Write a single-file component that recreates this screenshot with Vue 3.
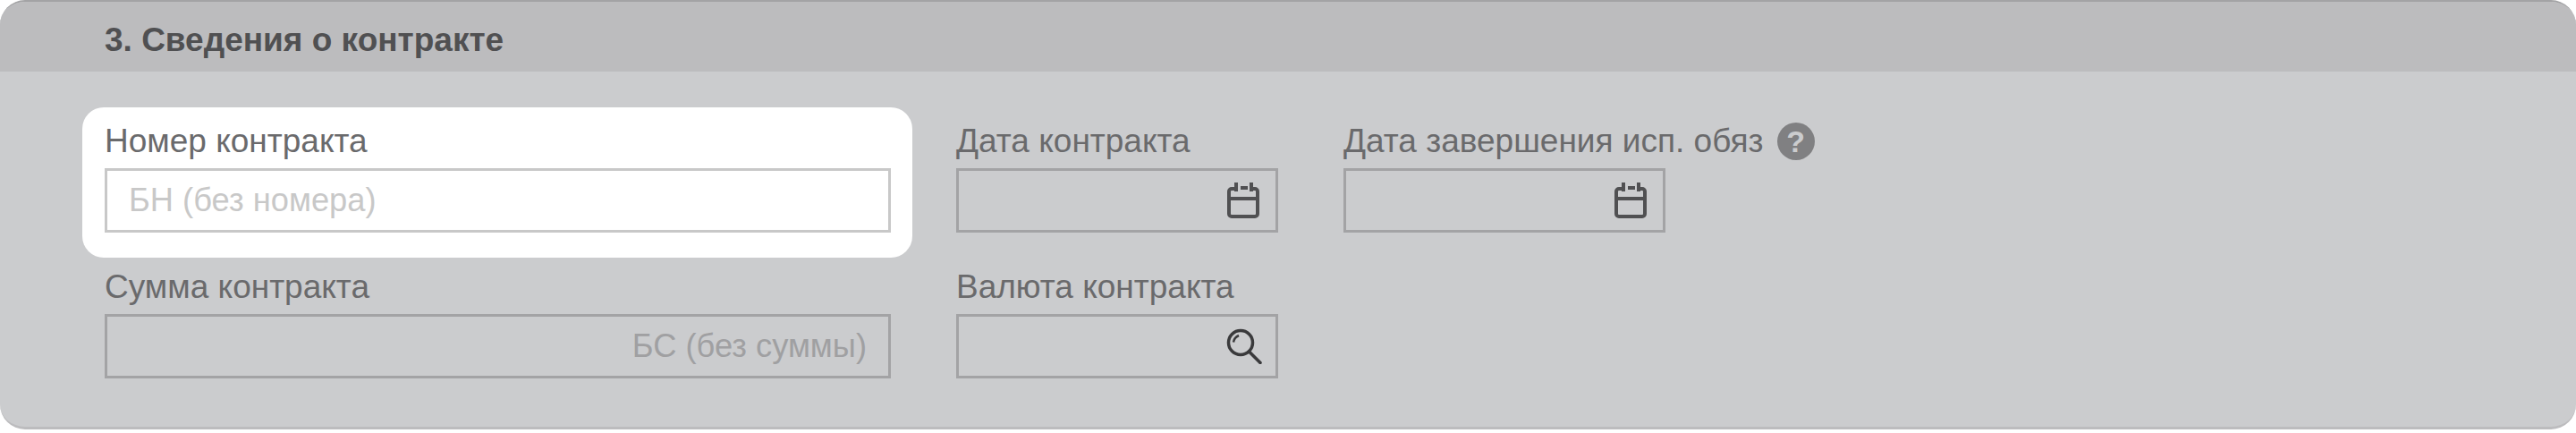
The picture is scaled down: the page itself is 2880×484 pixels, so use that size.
<script setup>
const rows = [
  [
    { label: 'Номер контракта', wide: true, highlight: true, placeholder: 'БН (без номера)' },
    { label: 'Дата контракта', icon: 'calendar' },
    { label: 'Дата завершения исп. обяз', icon: 'calendar', help: true },
  ],
  [
    { label: 'Сумма контракта', wide: true, placeholder: 'БС (без суммы)', right: true },
    { label: 'Валюта контракта', icon: 'search' },
  ],
]
</script>

<template>
  <section class="panel">
    <header class="panel-head">
      <h2>3. Сведения о контракте</h2>
    </header>
    <div class="panel-body">
      <div v-for="(row, i) in rows" :key="i" class="row">
        <div
          v-for="field in row"
          :key="field.label"
          class="field"
          :class="{ wide: field.wide, highlight: field.highlight }"
        >
          <div class="label">
            <span>{{ field.label }}</span>
            <span v-if="field.help" class="help">?</span>
          </div>
          <div class="input" :class="field.icon">
            <span v-if="field.placeholder" class="placeholder">{{ field.placeholder }}</span>
            <svg v-if="field.icon === 'calendar'" width="36" height="40" viewBox="0 0 36 40" fill="none" stroke="#505052" stroke-width="4">
              <path d="M8 7H5A3 3 0 0 0 2 10V35A3 3 0 0 0 5 38H31A3 3 0 0 0 34 35V10A3 3 0 0 0 31 7H29" />
              <path d="M2 18H34" />
              <path d="M10 0V10M27 0V10M15 6H23" />
            </svg>
            <svg v-if="field.icon === 'search'" width="40" height="40" viewBox="0 0 40 40" fill="none" stroke="#3a3a3c" stroke-width="3.500">
              <circle cx="16" cy="16" r="13.500" />
              <path d="M25.500 26L38 38.500" stroke-linecap="round" />
              <path d="M8 15.500C8.500 12 10.500 9.500 14 8" stroke-width="2.500" />
            </svg>
          </div>
        </div>
      </div>
    </div>
  </section>
</template>

<style scoped>
.panel {
  width: 2880px;
  height: 480px;
  box-sizing: border-box;
  background: #cbccce;
  border-top: 2px solid #a3a3a5;
  border-bottom: 3px solid #bcbcbe;
  border-radius: 28px;
  overflow: hidden;
  font-family: "Liberation Sans", Arial, sans-serif;
}

.panel-head {
  height: 78px;
  box-sizing: border-box;
  background: #bcbcbe;
  padding: 6px 0 0 117px;
  display: flex;
  align-items: center;
}

.panel-head h2 {
  margin: 0;
  font-size: 37px;
  line-height: 1;
  font-weight: 700;
  color: #505052;
}

.panel-body {
  padding: 56px 0 0 117px;
  display: flex;
  flex-direction: column;
  gap: 39px;
}

.row {
  display: flex;
  gap: 73px;
}

.field {
  width: 360px;
  position: relative;
}

.field.wide {
  width: 879px;
}

.highlight::before {
  content: "";
  position: absolute;
  inset: -16px -24px -28px -25px;
  background: #fff;
  border-radius: 24px;
}

.label,
.input {
  position: relative;
}

.label {
  height: 44px;
  margin-bottom: 8px;
  display: flex;
  align-items: center;
  gap: 15px;
  font-size: 37px;
  color: #6a6a6c;
  white-space: nowrap;
}

.help {
  flex: none;
  width: 42px;
  height: 42px;
  border-radius: 50%;
  background: #808082;
  color: #cbccce;
  font-size: 34px;
  font-weight: 700;
  display: flex;
  align-items: center;
  justify-content: center;
}

.input {
  height: 72px;
  box-sizing: border-box;
  border: 3px solid #a3a3a5;
  display: flex;
  align-items: center;
  justify-content: flex-end;
  padding: 0 24px;
}

.input.calendar {
  padding-right: 18px;
}

.input.search {
  padding-right: 15px;
}

.highlight .input {
  border-color: #c8c8c8;
  background: #fff;
  justify-content: flex-start;
}

.placeholder {
  font-size: 36.300px;
  color: #a0a0a2;
}

.highlight .placeholder {
  color: #c8c8c8;
}
</style>

<style>
html, body {
  background: #fff;
}
</style>
